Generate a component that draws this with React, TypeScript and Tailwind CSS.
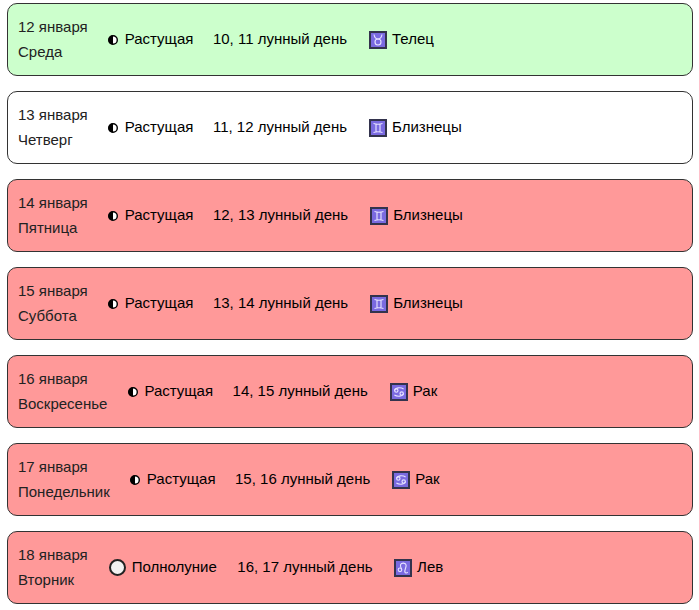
const days = [
  { date: "12 января", week: "Среда", bg: "bg-[#ccffcc]", moon: "half", phase: "Растущая", lunar: "10, 11 лунный день", sign: "taurus", name: "Телец" },
  { date: "13 января", week: "Четверг", bg: "bg-white", moon: "half", phase: "Растущая", lunar: "11, 12 лунный день", sign: "gemini", name: "Близнецы" },
  { date: "14 января", week: "Пятница", bg: "bg-[#ff9999]", moon: "half", phase: "Растущая", lunar: "12, 13 лунный день", sign: "gemini", name: "Близнецы" },
  { date: "15 января", week: "Суббота", bg: "bg-[#ff9999]", moon: "half", phase: "Растущая", lunar: "13, 14 лунный день", sign: "gemini", name: "Близнецы" },
  { date: "16 января", week: "Воскресенье", bg: "bg-[#ff9999]", moon: "half", phase: "Растущая", lunar: "14, 15 лунный день", sign: "cancer", name: "Рак" },
  { date: "17 января", week: "Понедельник", bg: "bg-[#ff9999]", moon: "half", phase: "Растущая", lunar: "15, 16 лунный день", sign: "cancer", name: "Рак" },
  { date: "18 января", week: "Вторник", bg: "bg-[#ff9999]", moon: "full", phase: "Полнолуние", lunar: "16, 17 лунный день", sign: "leo", name: "Лев" },
];

function SignIcon({ sign }: { sign: string }) {
  return (
    <svg width="18" height="18" viewBox="0 0 14 14" className="shrink-0 bg-[#7a6ae0] border-2 border-[#33334d]" fill="none" stroke="#e6e2ff" strokeWidth="1.15">
      {sign === "taurus" && (
        <>
          <circle cx="7" cy="9" r="3" />
          <path d="M3 1.500c.5 2.800 2 4.500 4 4.500s3.500-1.700 4-4.500" />
        </>
      )}
      {sign === "gemini" && <path d="M2.500 2.500c3 1 6 1 9 0M2.500 11.500c3-1 6-1 9 0M5 3v8M9 3v8" />}
      {sign === "cancer" && (
        <>
          <circle cx="4.300" cy="5.500" r="1.700" />
          <circle cx="9.700" cy="8.500" r="1.700" />
          <path d="M2.600 5.500c.5-3 6-3.500 9-1.500M11.400 8.500c-.5 3-6 3.500-9 1.500" />
        </>
      )}
      {sign === "leo" && (
        <>
          <circle cx="4" cy="8.800" r="1.800" />
          <path d="M5.600 8.500c-1-2.200-1.700-3.500-1-5 1-2 5-2 5.500 .5 .4 2.200-1.800 5-1.200 7 .4 1.300 2 1.300 2.800 .2" />
        </>
      )}
    </svg>
  );
}

function Moon({ type }: { type: string }) {
  if (type === "full") {
    return <span className="w-[17px] h-[17px] shrink-0 rounded-full bg-[#f2f2f2] border-2 border-[#222]" />;
  }
  return (
    <svg width="10" height="10" viewBox="0 0 10 10" className="shrink-0">
      <circle cx="5" cy="5" r="4.300" fill="#fff" stroke="#000" strokeWidth="1.400" />
      <path d="M5 .5a4.500 4.500 0 0 0 0 9z" fill="#000" />
    </svg>
  );
}

export default function App() {
  return (
    <div className="pl-[7px] pr-[6px] pt-[3px] flex flex-col gap-[15px] font-['Liberation_Sans',Arial,sans-serif] text-[15px] text-black">
      {days.map((d) => (
        <div key={d.date} className={`${d.bg} h-[73px] border border-[#333] rounded-[10px] pl-[10px] flex items-center`}>
          <div className="leading-[25px] text-[#222] -mt-[2px]">
            <div>{d.date}</div>
            <div>{d.week}</div>
          </div>
          <div className={`flex items-center ${d.moon === "full" ? "ml-[21px]" : "ml-[20.5px]"}`}>
            <Moon type={d.moon} />
            <span className={d.moon === "full" ? "ml-[6px]" : "ml-[6.5px]"}>{d.phase}</span>
          </div>
          <span className={d.moon === "full" ? "ml-[20.5px]" : "ml-[19.5px]"}>{d.lunar}</span>
          <div className={`flex items-center ${d.moon === "full" ? "ml-[21px]" : "ml-[22px]"}`}>
            <SignIcon sign={d.sign} />
            <span className={d.moon === "full" ? "ml-[5.5px]" : "ml-[5px]"}>{d.name}</span>
          </div>
        </div>
      ))}
    </div>
  );
}
